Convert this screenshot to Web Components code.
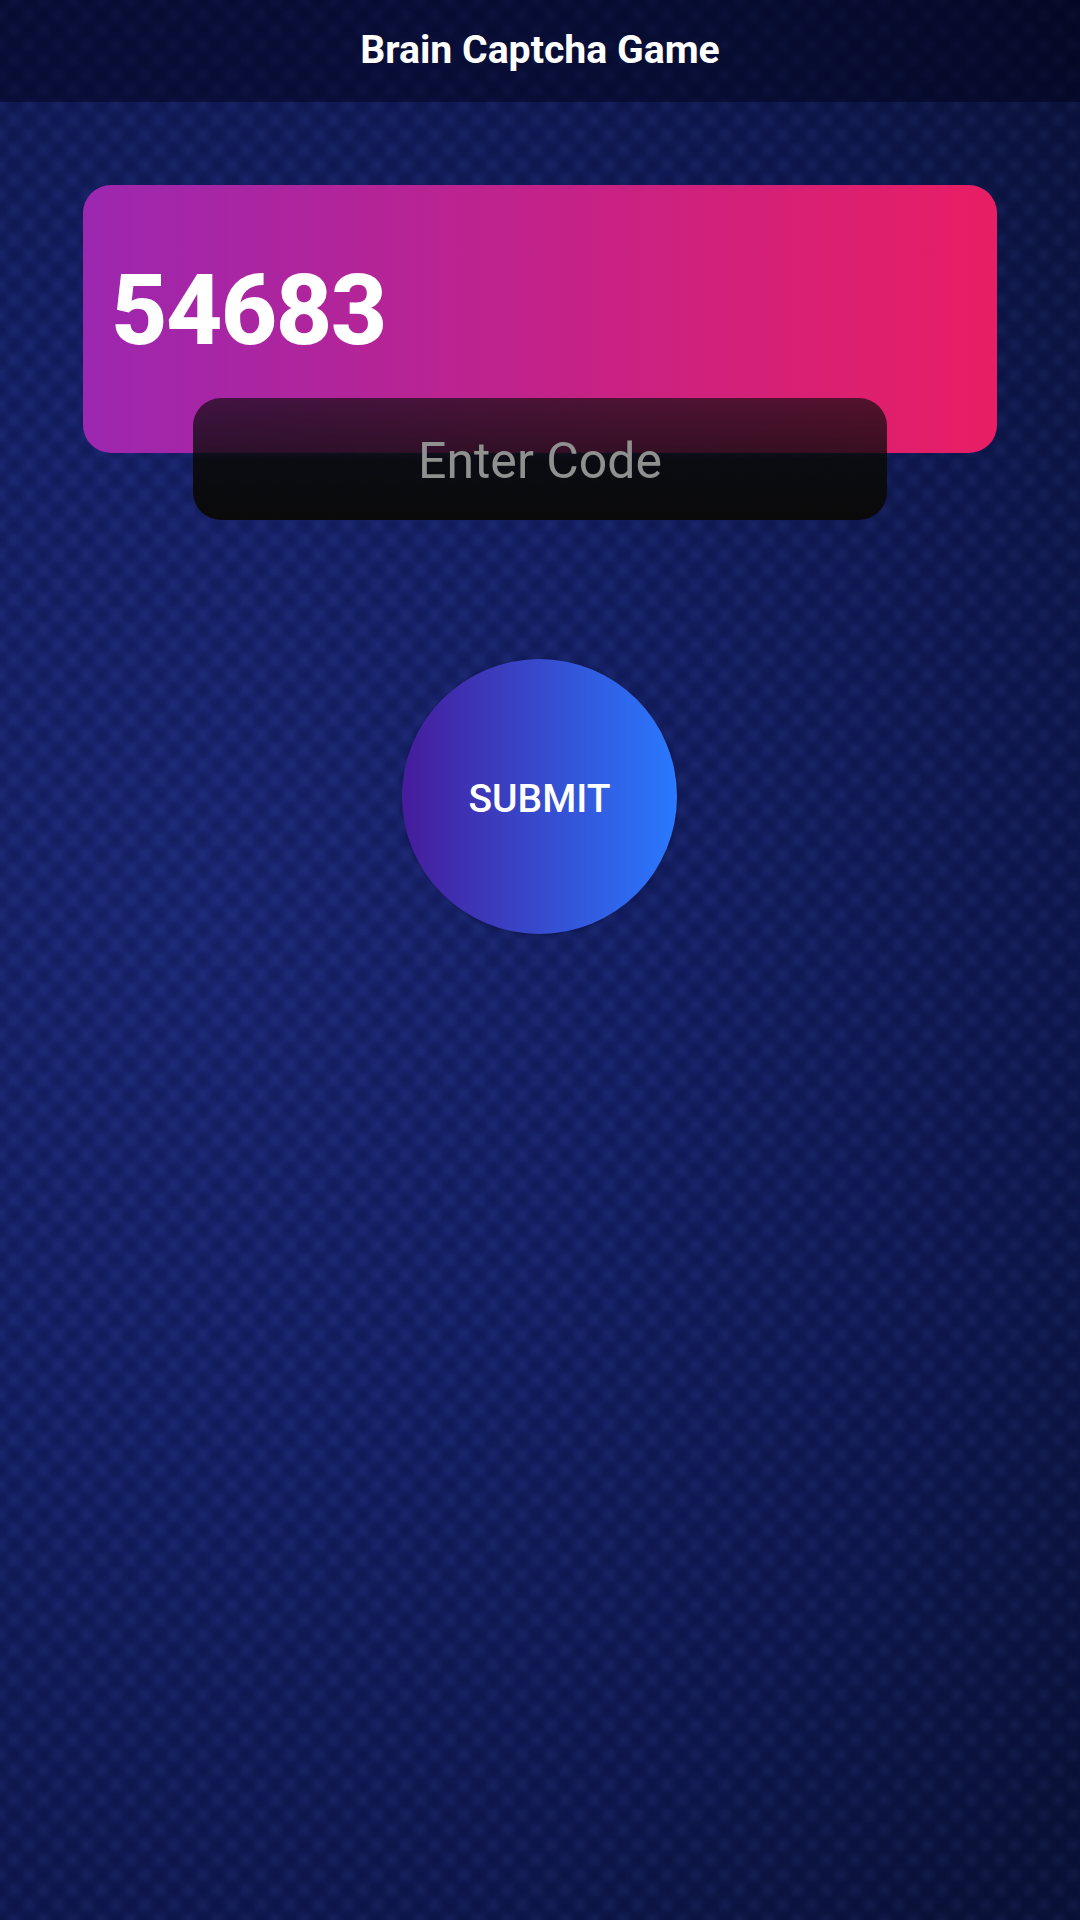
<!DOCTYPE html>
<html>
<head>
<meta charset="utf-8">
<title>Brain Captcha Game</title>
<style>
  html, body { margin: 0; padding: 0; }
  body { font-family: Roboto, "Liberation Sans", sans-serif; }
</style>
</head>
<body>
<game-screen>
  <game-header slot="header">Brain Captcha Game</game-header>
  <code-card>54683</code-card>
  <code-input placeholder="Enter Code"></code-input>
  <submit-button>SUBMIT</submit-button>
</game-screen>

<script>
class GameScreen extends HTMLElement {
  constructor() {
    super();
    this.attachShadow({ mode: 'open' });
    this.shadowRoot.innerHTML = `
      <style>
        :host {
          display: flex;
          flex-direction: column;
          width: 1080px;
          height: 1920px;
          overflow: hidden;
          /* soft dark and light spots in a staggered 29x30 grid, then the big glow */
          background:
            radial-gradient(circle at 50% 50%, rgba(4, 8, 50, .26) 0, rgba(4, 8, 50, 0) 11px) 0 0 / 29px 30px,
            radial-gradient(circle at 50% 50%, rgba(4, 8, 50, .26) 0, rgba(4, 8, 50, 0) 11px) 14.5px 15px / 29px 30px,
            radial-gradient(circle at 50% 50%, rgba(90, 110, 200, .09) 0, rgba(90, 110, 200, 0) 9px) 14.5px 0 / 29px 30px,
            radial-gradient(circle at 50% 50%, rgba(90, 110, 200, .09) 0, rgba(90, 110, 200, 0) 9px) 0 15px / 29px 30px,
            radial-gradient(ellipse 1150px 1400px at 190px 900px, #1a2672 0%, #152065 40%, #0f194f 75%, #0a1238 100%);
        }
        main {
          display: flex;
          flex-direction: column;
          align-items: center;
          padding-top: 83px;
        }
      </style>
      <slot name="header"></slot>
      <main><slot></slot></main>
    `;
  }
}

class GameHeader extends HTMLElement {
  constructor() {
    super();
    this.attachShadow({ mode: 'open' });
    this.shadowRoot.innerHTML = `
      <style>
        :host {
          display: flex;
          align-items: center;
          justify-content: center;
          box-sizing: border-box;
          height: 102px;
          padding-bottom: 2px;
          background: rgba(0, 0, 20, .45);
          color: #fff;
          font: 700 39.2px Roboto, sans-serif;
        }
      </style>
      <slot></slot>
    `;
  }
}

class CodeCard extends HTMLElement {
  constructor() {
    super();
    this.attachShadow({ mode: 'open' });
    this.shadowRoot.innerHTML = `
      <style>
        :host {
          display: flex;
          align-items: center;
          box-sizing: border-box;
          width: 914px;
          height: 268px;
          padding: 0 0 18px 28px;
          border-radius: 28px;
          background: linear-gradient(90deg, #9c27b0, #e91e63);
          color: #fff;
          font: 800 98px Roboto, sans-serif;
          letter-spacing: -1.6px;
        }
      </style>
      <slot></slot>
    `;
  }
}

class CodeInput extends HTMLElement {
  constructor() {
    super();
    this.attachShadow({ mode: 'open' });
    const ph = this.getAttribute('placeholder') || '';
    this.shadowRoot.innerHTML = `
      <style>
        :host {
          display: flex;
          align-items: center;
          justify-content: center;
          box-sizing: border-box;
          width: 694px;
          height: 122px;
          margin-top: -55px;
          padding-top: 4px;
          border-radius: 28px;
          background: linear-gradient(180deg,
            rgba(10, 10, 10, .65) 0%,
            rgba(10, 10, 10, .78) 44%,
            rgba(10, 10, 10, .9) 50%,
            rgba(10, 10, 10, 1) 100%);
          color: #909090;
          font: 400 50px Roboto, sans-serif;
        }
      </style>
      <span>${ph}</span>
    `;
  }
}

class SubmitButton extends HTMLElement {
  constructor() {
    super();
    this.attachShadow({ mode: 'open' });
    this.shadowRoot.innerHTML = `
      <style>
        :host {
          display: flex;
          align-items: center;
          justify-content: center;
          box-sizing: border-box;
          width: 275px;
          height: 275px;
          margin: 139px 1px 0 0;
          padding-top: 4px;
          border-radius: 50%;
          background: linear-gradient(90deg, #451c9c, #2979ff);
          box-shadow: 0 1px 4px rgba(0, 0, 30, .3);
          color: #fff;
          font: 500 39px Roboto, sans-serif;
        }
      </style>
      <slot></slot>
    `;
  }
}

customElements.define('game-screen', GameScreen);
customElements.define('game-header', GameHeader);
customElements.define('code-card', CodeCard);
customElements.define('code-input', CodeInput);
customElements.define('submit-button', SubmitButton);
</script>
</body>
</html>
